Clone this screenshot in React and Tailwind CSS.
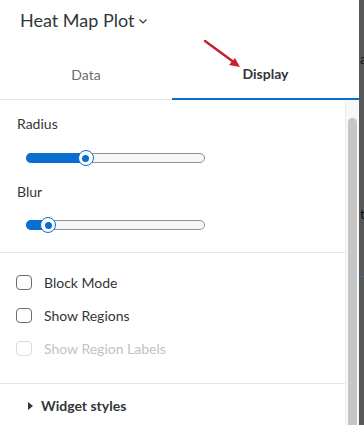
import React, { useState } from 'react'

const Slider = ({ value }) => {
  // value is the fraction of the track that is filled
  return (
    <div className="relative ml-[26px] h-[16px] w-[179px]">
      <div className="absolute left-0 top-[3px] h-[10px] w-full rounded-full border border-[#8d9296] bg-[#f7f7f7]" />
      <div
        className="absolute left-0 top-[3px] h-[10px] rounded-l-full bg-[#0a6ed1]"
        style={{ width: `${value * 100}%` }}
      />
      <div
        className="absolute top-0 flex h-[16px] w-[16px] -translate-x-1/2 items-center justify-center rounded-full border border-[#0a6ed1] bg-white"
        style={{ left: `${value * 100}%` }}
      >
        <div className="h-[7px] w-[7px] rounded-full bg-[#0a6ed1]" />
      </div>
    </div>
  )
}

const Checkbox = ({ label, disabled }) => (
  <div className="flex h-[33px] items-center">
    <div
      className={`ml-[16px] h-[15px] w-[16px] rounded-[4px] border bg-white ${
        disabled ? 'border-[#d9d9d9]' : 'border-[#6a6d70]'
      }`}
    />
    <span className={`ml-[12px] text-[14px] ${disabled ? 'text-[#c2c2c2]' : 'text-[#32363a]'}`}>
      {label}
    </span>
  </div>
)

const App = () => {
  const [tab, setTab] = useState('display')

  return (
    <div className="flex h-[425px] w-[364px] overflow-hidden bg-white font-['Lato',sans-serif] text-[#32363a]">
      <div className="relative flex w-[359px] flex-col">
        <div className="h-[48px] pl-[20px] pt-[8px]">
          <div className="flex h-[24px] items-center">
            <span className="text-[18px] leading-[24px]">Heat Map Plot</span>
            <svg className="ml-[5px] mt-[3px]" width="8" height="5" viewBox="0 0 8 5">
              <path d="M0.5 0.5 L4 4 L7.5 0.5" fill="none" stroke="#32363a" strokeWidth="1.1" />
            </svg>
          </div>
        </div>

        <div className="flex h-[52px] border-b border-[#e5e5e5]">
          <button
            onClick={() => setTab('data')}
            className={`-mb-px flex w-[172px] items-center justify-center text-[14px] ${
              tab === 'data' ? 'border-b-2 border-[#0a6ed1] font-bold text-[#32363a]' : 'text-[#6a6d70]'
            }`}
          >
            Data
          </button>
          <button
            onClick={() => setTab('display')}
            className={`-mb-px flex flex-1 items-center justify-center text-[14px] ${
              tab === 'display' ? 'border-b-2 border-[#0a6ed1] font-bold text-[#32363a]' : 'text-[#6a6d70]'
            }`}
          >
            Display
          </button>
        </div>

        <div className="flex flex-1 overflow-hidden">
          <div className="w-[346px] border-r border-[#ebebeb]">
            <div className="border-b border-[#e5e5e5] pb-[19px] pt-[14px]">
              <div className="pl-[17px] text-[14px] leading-[20px]">Radius</div>
              <div className="mt-[16px]">
                <Slider value={0.335} />
              </div>
              <div className="mt-[16px] pl-[17px] text-[14px] leading-[20px]">Blur</div>
              <div className="mt-[15px]">
                <Slider value={0.123} />
              </div>
            </div>

            <div className="border-b border-[#e5e5e5] pb-[18px] pt-[13px]">
              <Checkbox label="Block Mode" />
              <Checkbox label="Show Regions" />
              <Checkbox label="Show Region Labels" disabled />
            </div>

            <div className="flex items-center pl-[28px] pt-[12px]">
              <svg width="5" height="8" viewBox="0 0 5 8">
                <path d="M0 0 L5 4 L0 8 Z" fill="#32363a" />
              </svg>
              <span className="ml-[8px] text-[14px] font-bold leading-[20px]">Widget styles</span>
            </div>
          </div>

          <div className="w-[13px] bg-[#f8f8f8] pl-[2px] pt-[18px]">
            <div className="h-[400px] w-[9px] rounded-full bg-[#c6c6c6]" />
          </div>
        </div>

        <svg className="pointer-events-none absolute left-[200px] top-[36px]" width="46" height="36" viewBox="0 0 46 36">
          <path d="M5 5 L35 27" stroke="#c8202e" strokeWidth="2.5" strokeLinecap="round" />
          <path d="M40 31 L29 29 L35 22 Z" fill="#c8202e" />
        </svg>
      </div>

      <div className="relative w-[5px] bg-[#585858] text-[14px] text-[#111]">
        <span className="absolute left-[1px] top-[48px]">a</span>
        <span className="absolute left-[1px] top-[203px]">t</span>
        <div className="absolute left-0 top-[276px] h-px w-full bg-[#3b6ea5]" />
      </div>
    </div>
  )
}

export default App
